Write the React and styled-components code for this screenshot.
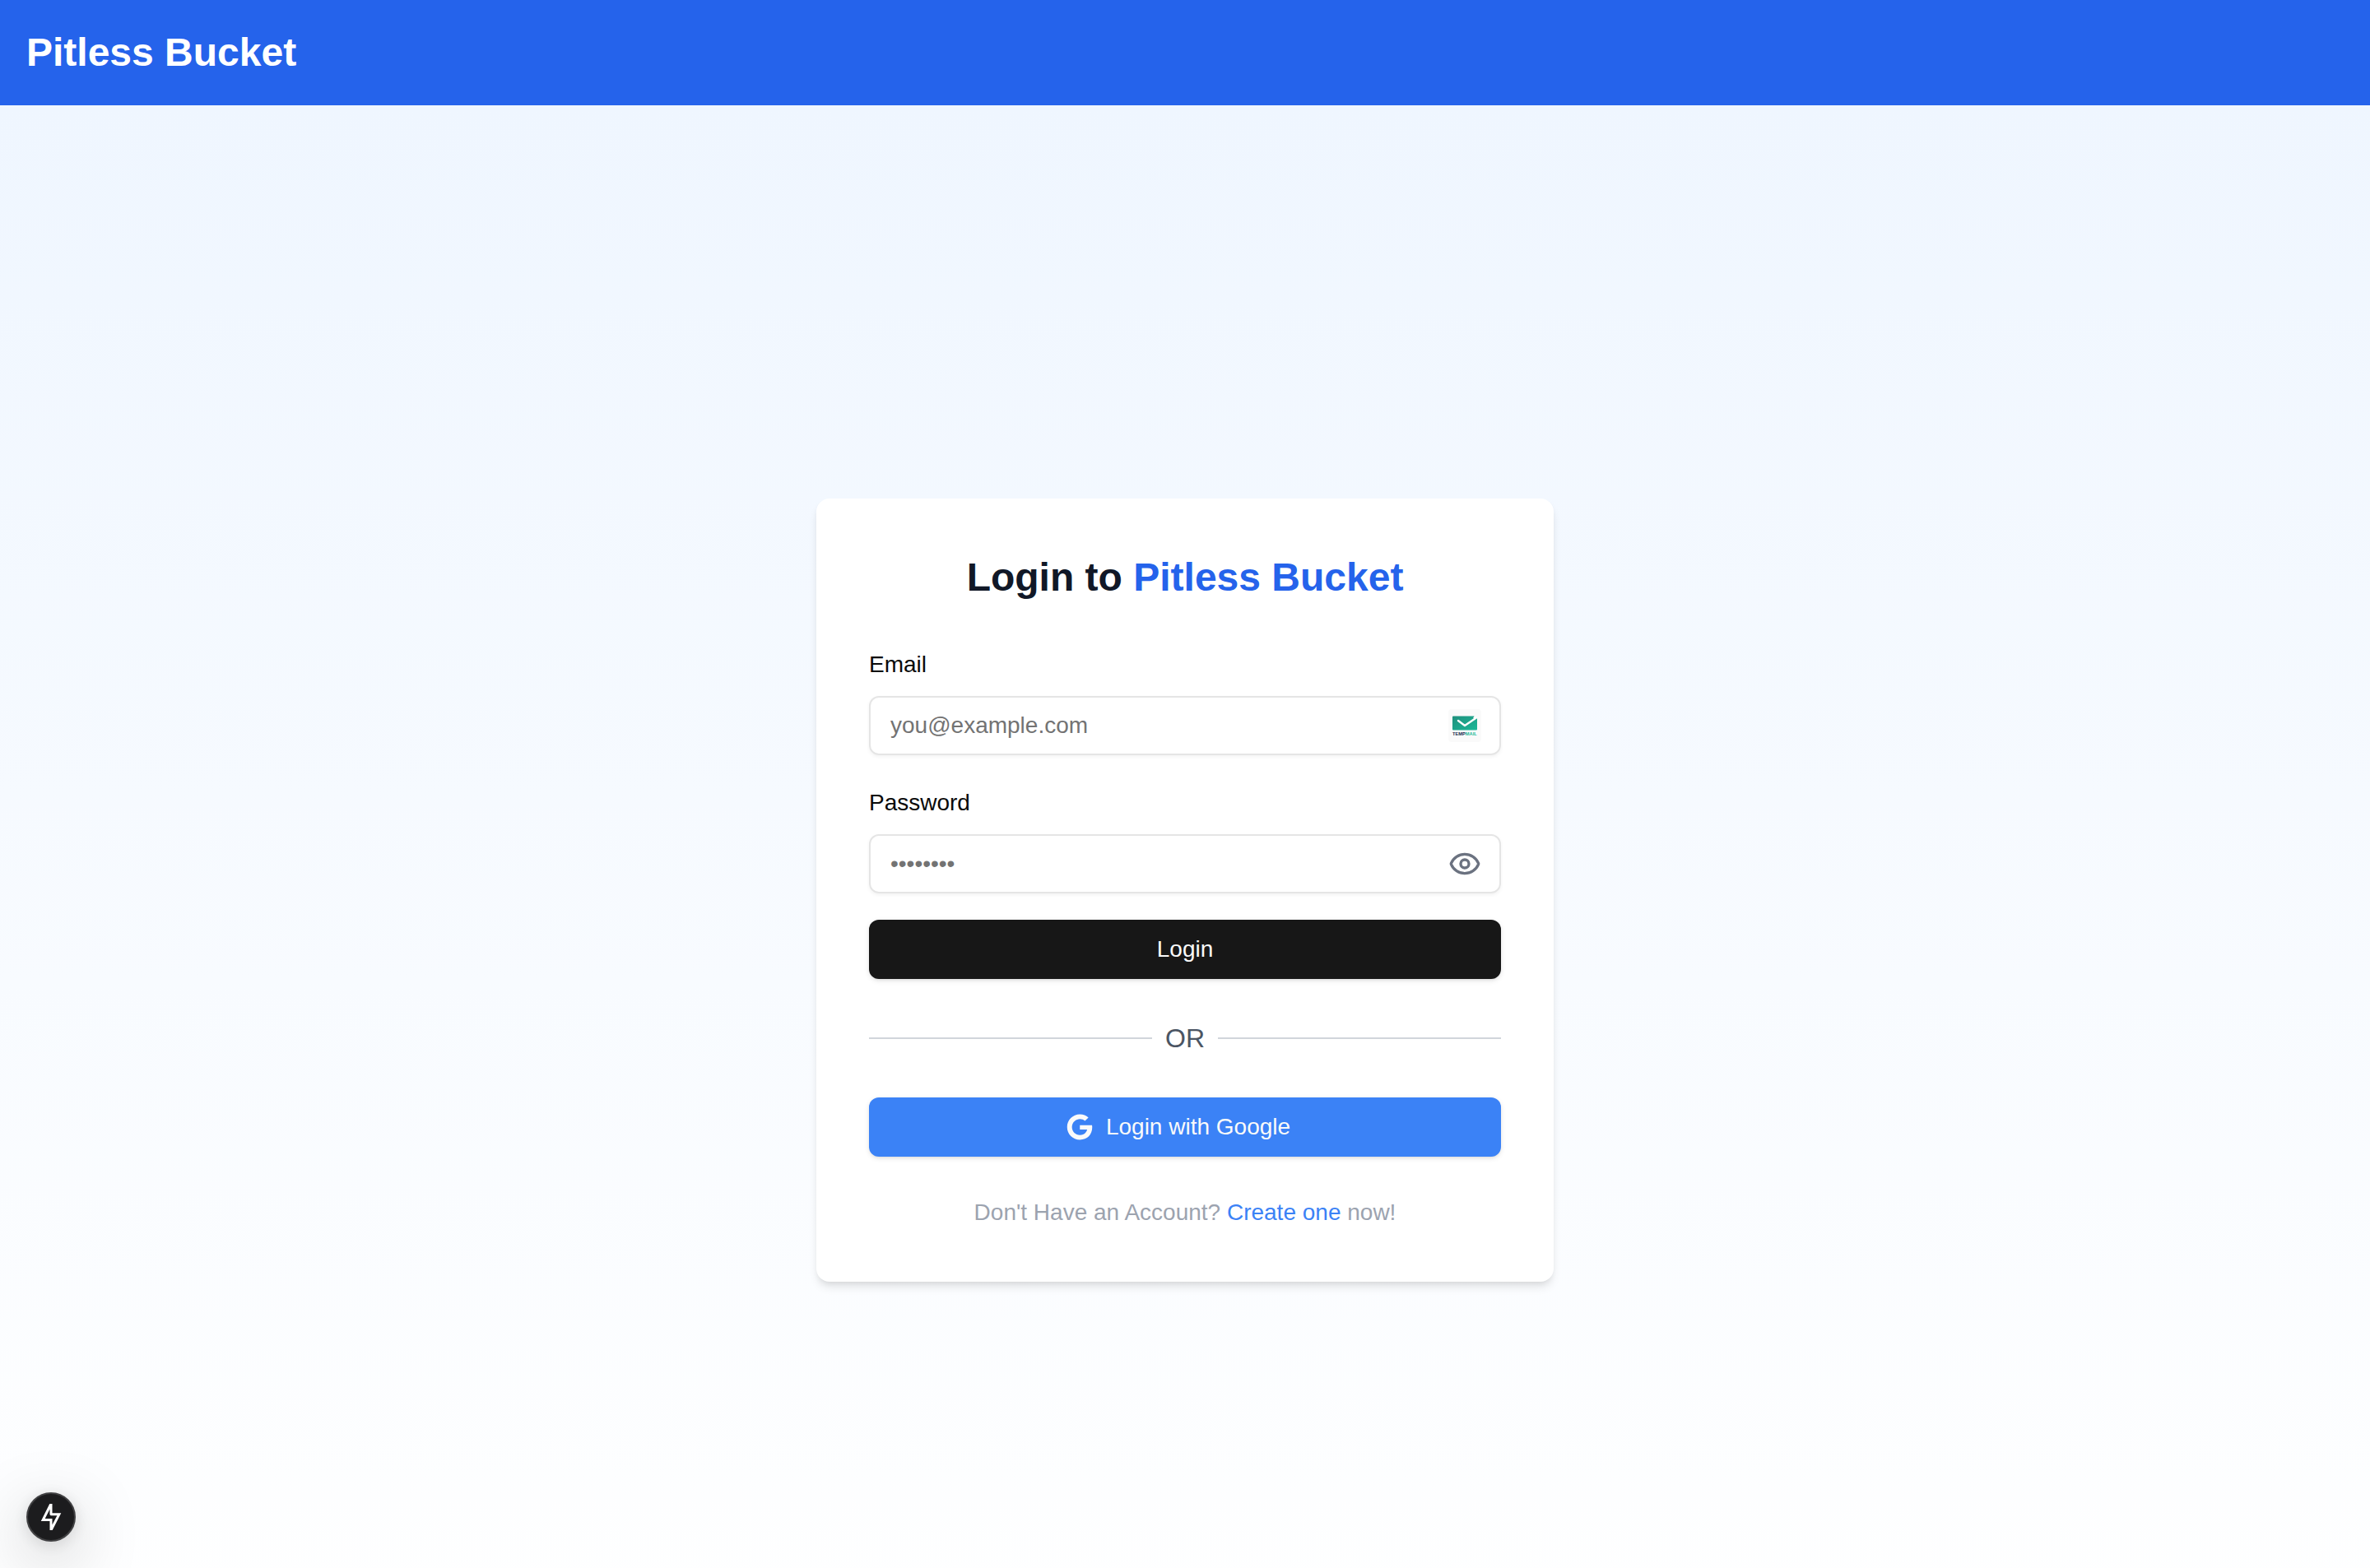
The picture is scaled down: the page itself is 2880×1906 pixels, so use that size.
import React, { useState } from "react";
import styled, { createGlobalStyle } from "styled-components";
import { Eye } from "lucide-react";
import { FaGoogle } from "react-icons/fa";

const GlobalStyle = createGlobalStyle`
  *, *::before, *::after { box-sizing: border-box; }
  body {
    margin: 0;
    color: #0a0a0a;
    font-family: "Liberation Sans", Arial, sans-serif;
    font-size: 32px;
    line-height: 48px;
  }
  button, input { font-family: inherit; }
`;

const Page = styled.div`
  height: 100vh;
  overflow: hidden;
  display: flex;
  flex-direction: column;
`;

const Header = styled.header`
  flex: none;
  padding: 32px;
  background: #2563eb;
`;

const Brand = styled.div`
  color: #ffffff;
  font-size: 48px;
  line-height: 64px;
  font-weight: 700;
`;

const Main = styled.main`
  flex: none;
  min-height: 100vh;
  padding-top: 2px;
  display: flex;
  align-items: center;
  justify-content: center;
  background: linear-gradient(to bottom, #eff6ff, #ffffff);
`;

const Card = styled.section`
  width: 100%;
  max-width: 896px;
  padding: 64px;
  border-radius: 16px;
  background: #ffffff;
  box-shadow: 0 8px 12px -2px rgba(0, 0, 0, 0.1), 0 4px 8px -4px rgba(0, 0, 0, 0.1);
`;

const Title = styled.h1`
  margin: 0 0 48px;
  color: #111827;
  font-size: 48px;
  line-height: 64px;
  font-weight: 700;
  text-align: center;

  span { color: #2563eb; }
`;

const Form = styled.form`
  display: flex;
  flex-direction: column;
  gap: 32px;
`;

const Field = styled.div`
  display: flex;
  flex-direction: column;
  gap: 16px;
`;

const Label = styled.label`
  font-size: 28px;
  line-height: 28px;
`;

const InputWrap = styled.div`
  position: relative;
  display: flex;
`;

const Input = styled.input`
  width: 100%;
  height: 72px;
  padding: 8px 80px 8px 24px;
  border: 2px solid #e5e5e5;
  border-radius: 12px;
  background: transparent;
  color: #0a0a0a;
  font-size: 28px;
  line-height: 40px;
  box-shadow: 0 2px 4px rgba(0, 0, 0, 0.05);

  &::placeholder { color: #737373; opacity: 1; }
`;

const InputAction = styled.button`
  position: absolute;
  top: 16px;
  right: 24px;
  width: 40px;
  height: 40px;
  padding: 0;
  border: 0;
  background: none;
  color: #6b7280;
  cursor: pointer;

  svg { display: block; }
`;

const Button = styled.button`
  width: 100%;
  height: 72px;
  display: flex;
  align-items: center;
  justify-content: center;
  gap: 16px;
  padding: 0 32px;
  border: 0;
  border-radius: 12px;
  background: ${(p) => (p.$variant === "google" ? "#3b82f6" : "#171717")};
  color: #fafafa;
  font-size: 28px;
  line-height: 40px;
  box-shadow: 0 2px 6px rgba(0, 0, 0, 0.1), 0 2px 4px -2px rgba(0, 0, 0, 0.1);
  cursor: pointer;
`;

const GoogleLabel = styled.span`
  padding-right: 16px;
`;

const Divider = styled.div`
  display: flex;
  align-items: center;
  gap: 16px;
  margin: 48px 0;
  color: #4b5563;

  &::before, &::after {
    content: "";
    flex: 1;
    height: 2px;
    background: #d1d5db;
  }
`;

const SignUp = styled.p`
  margin: 48px 0 0;
  color: #9ca3af;
  font-size: 28px;
  line-height: 40px;
  text-align: center;

  a { color: #3b82f6; text-decoration: none; }
`;

const DevBadge = styled.button`
  position: fixed;
  left: 32px;
  bottom: 32px;
  width: 60px;
  height: 60px;
  padding: 0;
  border: 2px solid #414143;
  border-radius: 50%;
  background: #1c1c1e;
  display: flex;
  align-items: center;
  justify-content: center;
  box-shadow: 0 22px 80px rgba(0, 0, 0, 0.25), 0 4px 20px rgba(0, 0, 0, 0.12);
  cursor: pointer;

  svg { flex: none; }
`;

function TempMailIcon() {
  return (
    <svg width="40" height="40" viewBox="0 0 40 40" aria-hidden="true">
      <defs>
        <linearGradient id="envelope" x1="0" y1="0" x2="1" y2="1">
          <stop offset="0" stopColor="#1f907d" />
          <stop offset="1" stopColor="#1bb898" />
        </linearGradient>
      </defs>
      <rect width="40" height="40" rx="4" fill="#fafafa" />
      <path d="M6 8.600H31.500L30 11L35 11V24.500a1 1 0 0 1-1 1H6a1 1 0 0 1-1-1V9.600a1 1 0 0 1 1-1z" fill="url(#envelope)" />
      <path d="M12 14l8 6 14-9.500" fill="none" stroke="#ffffff" strokeWidth="2.4" strokeLinecap="round" strokeLinejoin="round" />
      <text x="5" y="32" fontSize="5.7" fontWeight="700" fill="#16294a">
        TEMP<tspan fill="#1bb898">MAIL</tspan>
      </text>
    </svg>
  );
}

function BoltIcon() {
  return (
    <svg width="60" height="60" viewBox="0 0 60 60" fill="#ffffff" aria-hidden="true">
      <path
        fillRule="evenodd"
        d="M28.300 14H31.500V25.300H42.300L31.700 46H28.500V35H17.800ZM28.500 20.500L22.700 32H31.500V39.500L37.400 28.300H30Q28.500 28.300 28.500 26.500Z"
      />
    </svg>
  );
}

export default function App() {
  const [visible, setVisible] = useState(false);

  return (
    <>
      <GlobalStyle />
      <Page>
        <Header>
          <Brand>Pitless Bucket</Brand>
        </Header>
        <Main>
          <Card>
            <Title>
              Login to <span>Pitless Bucket</span>
            </Title>
            <Form onSubmit={(e) => e.preventDefault()}>
              <Field>
                <div>
                  <Label htmlFor="email">Email</Label>
                </div>
                <InputWrap>
                  <Input id="email" type="email" placeholder="you@example.com" />
                  <InputAction type="button" aria-label="Temp Mail">
                    <TempMailIcon />
                  </InputAction>
                </InputWrap>
              </Field>
              <Field>
                <div>
                  <Label htmlFor="password">Password</Label>
                </div>
                <InputWrap>
                  <Input id="password" type={visible ? "text" : "password"} placeholder="••••••••" />
                  <InputAction type="button" aria-label="Show password" onClick={() => setVisible(!visible)}>
                    <Eye size={40} />
                  </InputAction>
                </InputWrap>
              </Field>
              <Button type="submit">Login</Button>
            </Form>
            <Divider>OR</Divider>
            <Button type="button" $variant="google">
              <FaGoogle size={32} aria-hidden="true" />
              <GoogleLabel>Login with Google</GoogleLabel>
            </Button>
            <SignUp>
              Don't Have an Account? <a href="#signup">Create one</a> now!
            </SignUp>
          </Card>
        </Main>
      </Page>
      <DevBadge type="button" aria-label="Build activity">
        <BoltIcon />
      </DevBadge>
    </>
  );
}
